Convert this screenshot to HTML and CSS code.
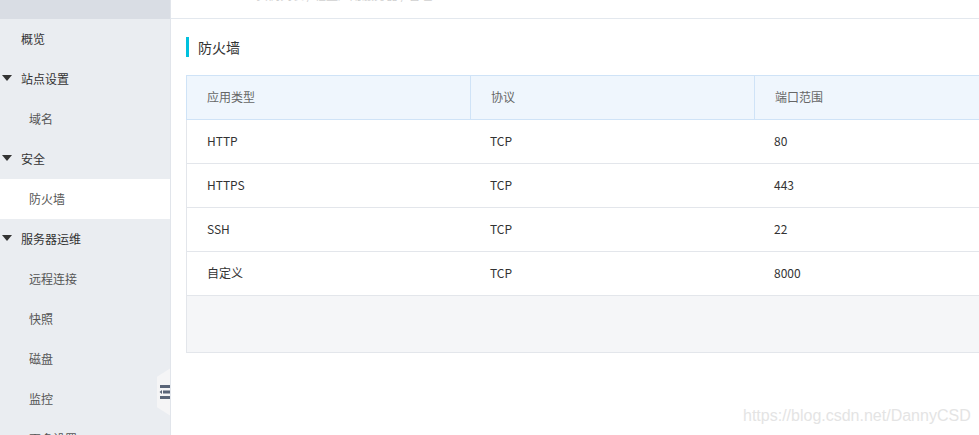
FILE: index.html
```html
<!DOCTYPE html>
<html lang="zh-CN">
<head>
  <meta charset="UTF-8" />
  <title>防火墙</title>
  <link rel="stylesheet" href="styles.css">
</head>
<body>
  <div class="layout">
    <aside class="sidebar">
      <div class="sidebar-top"></div>
      <ul class="menu">
        <li class="item">概览</li>
        <li class="item group"><span class="caret"></span>站点设置</li>
        <li class="item sub">域名</li>
        <li class="item group"><span class="caret"></span>安全</li>
        <li class="item sub active">防火墙</li>
        <li class="item group"><span class="caret"></span>服务器运维</li>
        <li class="item sub">远程连接</li>
        <li class="item sub">快照</li>
        <li class="item sub">磁盘</li>
        <li class="item sub">监控</li>
        <li class="item sub">更多设置</li>
      </ul>
      <div class="collapse">
        <svg width="12" height="14" viewBox="0 0 12 14">
          <rect x="1" y="0" width="11" height="3" fill="#5a6578"/>
          <rect x="4" y="5.5" width="8" height="3" fill="#5a6578"/>
          <path d="M3 5 L0.5 7 L3 9 Z" fill="#5a6578"/>
          <rect x="1" y="11" width="11" height="3" fill="#5a6578"/>
        </svg>
      </div>
    </aside>

    <main class="main">
      <div class="topbar">
        <span class="crumb">实例列表 / 轻量应用服务器 / 管理</span>
      </div>
      <div class="content">
        <h2 class="title">防火墙</h2>
        <div class="table">
          <div class="row head">
            <div class="cell">应用类型</div>
            <div class="cell">协议</div>
            <div class="cell">端口范围</div>
          </div>
          <div class="row">
            <div class="cell">HTTP</div>
            <div class="cell">TCP</div>
            <div class="cell">80</div>
          </div>
          <div class="row">
            <div class="cell">HTTPS</div>
            <div class="cell">TCP</div>
            <div class="cell">443</div>
          </div>
          <div class="row">
            <div class="cell">SSH</div>
            <div class="cell">TCP</div>
            <div class="cell">22</div>
          </div>
          <div class="row">
            <div class="cell">自定义</div>
            <div class="cell">TCP</div>
            <div class="cell">8000</div>
          </div>
          <div class="table-foot"></div>
        </div>
      </div>
      <div class="watermark">https://blog.csdn.net/DannyCSD</div>
    </main>
  </div>
</body>
</html>
```

FILE: styles.css
```css
* {
  box-sizing: border-box;
}
body {
  margin: 0;
  font-family: "Noto Sans CJK SC", "Noto Sans", sans-serif;
  font-size: 12px;
  color: #333;
  background: #fff;
  overflow: hidden;
}
.layout {
  display: flex;
  height: 435px;
  overflow: hidden;
}

/* sidebar */
.sidebar {
  position: relative;
  width: 171px;
  flex-shrink: 0;
  background: #eaedf1;
  border-right: 1px solid #e1e5eb;
  overflow: hidden;
}
.sidebar-top {
  height: 19px;
  background: #d9dde4;
}
.menu {
  list-style: none;
  margin: 0;
  padding: 0;
}
.item {
  position: relative;
  height: 40px;
  line-height: 40px;
  padding-left: 21px;
  color: #333;
}
.item.sub {
  padding-left: 29px;
  color: #555;
}
.item.active {
  background: #fff;
}
.caret {
  position: absolute;
  left: 2px;
  top: 16px;
  width: 0;
  height: 0;
  border-left: 5px solid transparent;
  border-right: 5px solid transparent;
  border-top: 6px solid #333;
}
.collapse {
  position: absolute;
  right: -1px;
  top: 368px;
  width: 14px;
  height: 48px;
  background: #f5f5f6;
  clip-path: polygon(0 18%, 100% 0, 100% 100%, 0 82%);
  display: flex;
  align-items: center;
  justify-content: flex-end;
}

/* main */
.main {
  position: relative;
  flex: 1;
  min-width: 0;
}
.topbar {
  height: 19px;
  border-bottom: 1px solid #e3e8ee;
  overflow: hidden;
}
.crumb {
  display: block;
  margin-top: -12px;
  padding-left: 85px;
  color: #d0d0d0;
  font-size: 12px;
  line-height: 14px;
}
.content {
  padding: 18px 0 0 15px;
}
.title {
  margin: 0 0 18px 0;
  height: 20px;
  line-height: 20px;
  font-size: 14px;
  font-weight: normal;
  color: #333;
  padding-left: 9px;
  border-left: 3px solid #00c1de;
}
.table {
  width: 830px;
  border: 1px solid #e3e6eb;
}
.row {
  display: grid;
  grid-template-columns: 283px 284px 1fr;
  height: 44px;
  border-bottom: 1px solid #e3e6eb;
  align-items: center;
}
.row.head {
  background: #eff6fd;
  border: 1px solid #cfe3f7;
  margin: -1px -1px 0 -1px;
  height: 45px;
}
.row.head .cell {
  color: #666;
  height: 100%;
  display: flex;
  align-items: center;
}
.row.head .cell + .cell {
  border-left: 1px solid #cfe3f7;
}
.cell {
  padding: 0 0 2px 20px;
  color: #333;
}
.table-foot {
  height: 56px;
  background: #f5f6f8;
}
.watermark {
  position: absolute;
  left: 572px;
  top: 407px;
  font-family: "Liberation Sans", Arial, sans-serif;
  font-size: 16px;
  color: #e4e4e4;
}
```
